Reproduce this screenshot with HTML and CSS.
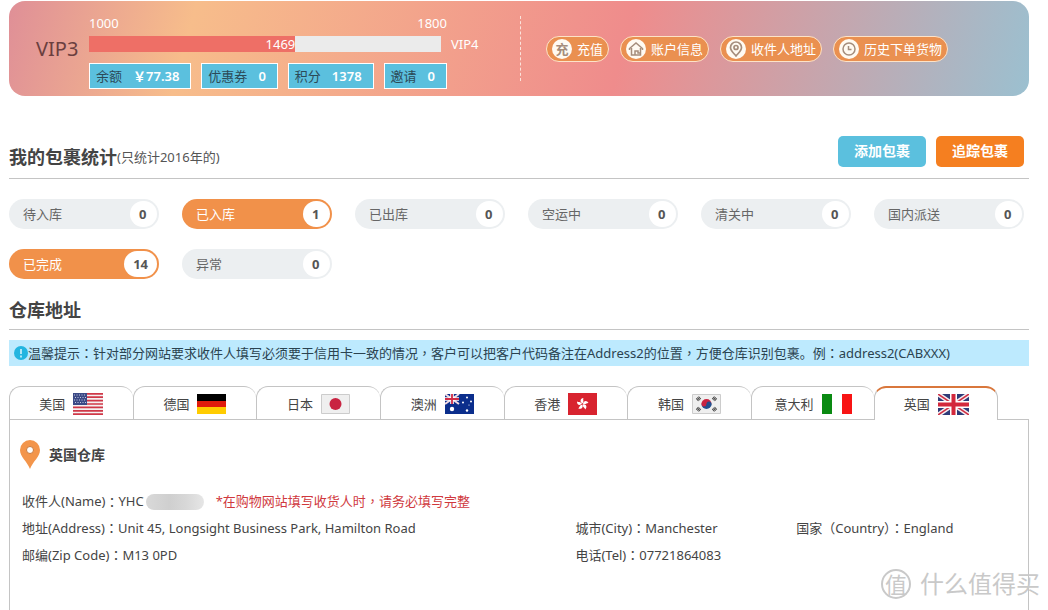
FILE: index.html
```html
<!DOCTYPE html>
<html lang="zh-CN">
<head>
<meta charset="utf-8">
<title>我的包裹</title>
<link rel="stylesheet" href="styles.css">
</head>
<body>
<div class="page">
  <header class="member">
    <div class="level">VIP3</div>
    <div class="growth">
      <div class="range"><span>1000</span><span>1800</span></div>
      <div class="bar-row">
        <div class="bar" role="progressbar" aria-valuemin="1000" aria-valuemax="1800" aria-valuenow="1469"><div class="bar-fill" style="width:58.6%">1469</div></div>
        <span class="next-level">VIP4</span>
      </div>
      <div class="stats">
        <a class="stat" href="#">余额 <b>￥77.38</b></a>
        <a class="stat" href="#">优惠券 <b>0</b></a>
        <a class="stat" href="#">积分 <b>1378</b></a>
        <a class="stat" href="#">邀请 <b>0</b></a>
      </div>
    </div>
    <nav class="links">
      <a class="link" href="#"><span class="dot">充</span>充值</a>
      <a class="link" href="#"><span class="dot"><svg width="16" height="16" viewBox="0 0 16 16" fill="none" stroke="#a58d7c" stroke-width="1.500"><path d="M1.500 9V7.500L8 2l6.500 5.500V9M3.500 7v7h9V7"/><path d="M7 14v-4h3v2h2"/></svg></span>账户信息</a>
      <a class="link" href="#"><span class="dot"><svg width="16" height="16" viewBox="0 0 16 16" fill="none" stroke="#a58d7c" stroke-width="1.700"><path d="M8 15C5 11.500 2.500 9.500 2.500 6.500a5.500 5.500 0 0 1 11 0C13.500 9.500 11 11.500 8 15Z"/><circle cx="8" cy="6.500" r="2"/></svg></span>收件人地址</a>
      <a class="link" href="#"><span class="dot"><svg width="16" height="16" viewBox="0 0 16 16" fill="none" stroke="#a58d7c" stroke-width="1.500"><circle cx="8" cy="8" r="6"/><path d="M7.500 5v3.500h3"/></svg></span>历史下单货物</a>
    </nav>
  </header>

  <section>
    <div class="heading heading-stats">
      <h2>我的包裹统计</h2><span class="note">(只统计2016年的)</span>
      <div class="actions">
        <button class="btn btn-blue" type="button">添加包裹</button>
        <button class="btn btn-orange" type="button">追踪包裹</button>
      </div>
    </div>
    <div class="states">
      <a class="state" href="#">待入库<b>0</b></a>
      <a class="state on" href="#">已入库<b>1</b></a>
      <a class="state" href="#">已出库<b>0</b></a>
      <a class="state" href="#">空运中<b>0</b></a>
      <a class="state" href="#">清关中<b>0</b></a>
      <a class="state" href="#">国内派送<b>0</b></a>
      <a class="state on" href="#">已完成<b>14</b></a>
      <a class="state" href="#">异常<b>0</b></a>
    </div>
  </section>

  <section class="warehouse">
    <div class="heading"><h2>仓库地址</h2></div>
    <p class="tip"><svg width="14" height="14" viewBox="0 0 14 14"><circle cx="7" cy="7" r="7" fill="#23b5e0"/><path d="M7 3v5M7 9.500v2" stroke="#d5f2fc" stroke-width="1.600"/></svg><span>温馨提示<span class="mid" lang="zh-Hant">：</span>针对部分网站要求收件人填写必须要于信用卡一致的情况<span class="mid" lang="zh-Hant">，</span>客户可以把客户代码备注在Address2的位置<span class="mid" lang="zh-Hant">，</span>方便仓库识别包裹。例<span class="mid" lang="zh-Hant">：</span>address2(CABXXX)</span></p>
    <div class="tabs" role="tablist">
      <button class="tab" role="tab" type="button">美国
        <svg width="30" height="22" viewBox="0 0 30 22"><path fill="#f5f1f2" d="M0 0h30v22H0z"/><path stroke="#cf3848" stroke-width="1.700" d="M0 .85h30M0 4.200h30M0 7.600h30M0 11h30M0 14.400h30M0 17.800h30M0 21.150h30"/><path fill="#3c4a86" d="M0 0h14v12H0z"/><path stroke="#c3cae2" stroke-width="1" stroke-dasharray="1 1.500" d="M1 2h12M2 4.500h11M1 7h12M2 9.500h11"/></svg></button>
      <button class="tab" role="tab" type="button">德国
        <svg width="29" height="20" viewBox="0 0 29 20"><path d="M0 0h29v7H0z"/><path fill="#e01b0c" d="M0 7h29v6H0z"/><path fill="#fc0" d="M0 13h29v7H0z"/></svg></button>
      <button class="tab" role="tab" type="button">日本
        <svg width="29" height="20" viewBox="0 0 29 20"><path fill="#efefef" stroke="#ccc" d="M.5.5h28v19H.5z"/><circle cx="14.500" cy="10" r="6" fill="#c92442"/></svg></button>
      <button class="tab" role="tab" type="button">澳洲
        <svg width="29" height="20" viewBox="0 0 29 20"><path fill="#0b2e8c" d="M0 0h29v20H0z"/><path stroke="#f3dce4" stroke-width="2" d="m0 0 14 10M14 0 0 10"/><path stroke="#fff" stroke-width="3.600" d="M7 0v10M0 5h14"/><path stroke="#d02b45" stroke-width="1.800" d="M7 0v10M0 5h14"/><g fill="#fff"><circle cx="7" cy="15" r="2.200"/><circle cx="22" cy="3.500" r="1"/><circle cx="18" cy="8.500" r="1"/><circle cx="26" cy="7.500" r="1"/><circle cx="24" cy="11" r=".6"/><circle cx="22" cy="16.500" r="1.200"/></g></svg></button>
      <button class="tab" role="tab" type="button">香港
        <svg width="29" height="22" viewBox="0 0 29 22"><path fill="#d8232f" d="M0 0h29v22H0z"/><g fill="#fff" transform="translate(14.500 11)"><path id="petal" d="M0-.5C-3-2-2.500-5.500 1-6 0-4.500 2-3 0-.5Z"/><use href="#petal" transform="rotate(72)"/><use href="#petal" transform="rotate(144)"/><use href="#petal" transform="rotate(216)"/><use href="#petal" transform="rotate(288)"/></g></svg></button>
      <button class="tab" role="tab" type="button">韩国
        <svg width="29" height="20" viewBox="0 0 29 20"><path fill="#efefef" stroke="#ccc" d="M.5.5h28v19H.5z"/><path fill="#c92442" d="M9.500 10a5 5 0 0 1 10 0Z"/><path fill="#23508f" d="M9.500 10a5 5 0 0 0 10 0Z"/><circle cx="12" cy="10" r="2.500" fill="#c92442"/><circle cx="17" cy="10" r="2.500" fill="#23508f"/><path stroke="#444" stroke-width="3.500" stroke-dasharray="1 .5" d="m5 6 3-2.500M21 16.500l3-2.500M5 14l3 2.500M21 3.500 24 6"/></svg></button>
      <button class="tab" role="tab" type="button">意大利
        <svg width="30" height="20" viewBox="0 0 30 20"><path fill="#0a8a12" d="M0 0h10v20H0z"/><path fill="#fff" d="M10 0h10v20H10z"/><path fill="#f81414" d="M20 0h10v20H20z"/></svg></button>
      <button class="tab selected" role="tab" type="button" aria-selected="true">英国
        <svg width="31" height="21" viewBox="0 0 31 21"><path fill="#2e3b78" d="M0 0h31v21H0z"/><path stroke="#f5eef1" stroke-width="4.500" d="m0 0 31 21M31 0 0 21"/><path stroke="#cf3045" stroke-width="1.500" d="m0 0 31 21M31 0 0 21"/><path stroke="#fff" stroke-width="7" d="M15.500 0v21M0 10.500h31"/><path stroke="#d3283c" stroke-width="4" d="M15.500 0v21M0 10.500h31"/></svg></button>
    </div>
  </section>

  <section class="panel" role="tabpanel">
    <h3><svg width="20" height="29" viewBox="0 0 20 29"><path fill="#f3954b" d="M10 29C7 21 0 17 0 10a10 10 0 0 1 20 0c0 7-7 11-10 19Z"/><circle cx="10" cy="10" r="3.500" fill="#fff" stroke="#c9793c"/></svg>英国仓库</h3>
    <div class="details">
      <div class="wide">收件人(Name)<span class="mid" lang="zh-Hant">：</span>YHC<span class="masked"></span><span class="warn">*在购物网站填写收货人时<span class="mid" lang="zh-Hant">，</span>请务必填写完整</span></div>
      <div>地址(Address)<span class="mid" lang="zh-Hant">：</span>Unit 45, Longsight Business Park, Hamilton Road</div>
      <div>城市(City)<span class="mid" lang="zh-Hant">：</span>Manchester</div>
      <div>国家（Country<span class="mid" lang="zh-Hant">）</span><span class="mid" lang="zh-Hant">：</span>England</div>
      <div>邮编(Zip Code)<span class="mid" lang="zh-Hant">：</span>M13 0PD</div>
      <div>电话(Tel)<span class="mid" lang="zh-Hant">：</span>07721864083</div>
    </div>
  </section>
  <div class="watermark"><span class="seal">值</span>什么值得买</div>
</div>
</body>
</html>
```
FILE: styles.css
```css
* { box-sizing: border-box; }
body {
  margin: 0;
  background: #fff;
  color: #444;
  font: 13px/20px "Noto Sans", "Noto Sans CJK SC", sans-serif;
}
a { color: inherit; text-decoration: none; }
h2, h3, p { margin: 0; }
button { font: inherit; color: inherit; cursor: pointer; }
svg { flex: none; }
/* full-width punctuation centred in its square */
.mid { font-family: "Noto Sans CJK TC", sans-serif; line-height: 1; }

.page {
  position: relative;
  display: flex;
  flex-direction: column;
  min-height: 100vh;
  padding: 1px 19px 0 9px;
  overflow: hidden;
}

.member {
  display: flex;
  align-items: center;
  height: 95px;
  padding-left: 27px;
  border-radius: 16px;
  background: linear-gradient(105deg, #df8f97 0%, #f7bd8b 18%, #ef8c8c 60%, #9bc0d0 100%);
  color: #fff;
}
.level { width: 53px; font-size: 20px; color: #6b3f3f; }
.growth { width: 394px; padding-top: 3px; }
.range { display: flex; justify-content: space-between; width: 358px; line-height: 22px; }
.bar-row { display: flex; align-items: center; gap: 10px; height: 16px; margin: 2px 0 11px; }
.bar { width: 352px; height: 16px; background: #ebebeb; }
.bar-fill { height: 16px; background: #ee6f66; line-height: 16px; text-align: right; }
.stats { display: flex; gap: 10px; width: 358px; }
.stat {
  display: flex;
  flex: auto;
  justify-content: space-between;
  padding: 0 11px 0 6px;
  border: 1px solid #fff;
  background: #5bc0de;
  color: #2c4a57;
  line-height: 24px;
  white-space: nowrap;
}
.stat b { color: #fff; font-weight: 600; }

.links {
  display: flex;
  align-items: center;
  gap: 11px;
  height: 65px;
  margin-left: 37px;
  padding-left: 25px;
  border-left: 1px dashed #fbe3dc;
}
.link {
  display: flex;
  align-items: center;
  gap: 5px;
  height: 26px;
  padding: 0 5px;
  border: 1px solid #fde3c8;
  border-radius: 13px;
  background: #ea9050;
  white-space: nowrap;
}
.dot {
  display: flex;
  align-items: center;
  justify-content: center;
  width: 20px;
  height: 20px;
  border-radius: 50%;
  background: #fffaf2;
  color: #a58d7c;
  font-weight: 700;
}

.heading {
  display: flex;
  align-items: center;
  height: 40px;
  border-bottom: 1px solid #c4c4c4;
}
.heading h2 { font-size: 18px; line-height: 24px; }
.heading-stats { height: 44px; margin-top: 39px; }
.note { color: #555; }
.actions { display: flex; gap: 10px; margin: 0 5px 11px auto; }
.btn {
  height: 31px;
  padding: 0 16px;
  border: 0;
  border-radius: 5px;
  color: #fff;
  font-size: 14px;
  font-weight: 700;
}
.btn-blue { background: #5bc0de; }
.btn-orange { background: #f57f20; }

.states {
  display: grid;
  grid-template-columns: repeat(6, 1fr);
  gap: 20px 23px;
  padding: 20px 5px 0 0;
}
.state {
  display: flex;
  align-items: center;
  justify-content: space-between;
  height: 30px;
  padding: 0 2px 0 14px;
  border-radius: 15px;
  background: #eceff1;
  color: #666;
}
.state b {
  min-width: 27px;
  padding: 0 9px;
  border-radius: 13px;
  background: #fff;
  color: #555;
  line-height: 26px;
}
.state.on { background: #f1914a; color: #fff; }

.warehouse { padding-top: 11px; }
.tip {
  display: flex;
  align-items: center;
  min-height: 26px;
  margin-top: 10px;
  padding-left: 5px;
  background: #bdeafe;
  color: #2b4350;
}
.tabs {
  display: grid;
  grid-template-columns: repeat(8, 1fr);
  margin: 20px 31px 0 0;
}
.tab {
  display: flex;
  align-items: center;
  justify-content: center;
  gap: 8px;
  height: 33px;
  padding: 1px 0 0;
  border: 0 solid #c4c4c4;
  border-width: 1px 0 0 1px;
  border-radius: 12px 12px 0 0;
  background: #fff;
}
.tab.selected {
  position: relative;
  height: 34px;
  margin-bottom: -1px;
  padding: 0;
  border-width: 2px 1px 0;
  border-top-color: #d9773c;
}

.panel {
  flex: 1;
  padding: 20px 12px;
  border: 1px solid #c4c4c4;
  border-bottom: 0;
}
.panel h3 {
  display: flex;
  align-items: center;
  gap: 9px;
  font-size: 14px;
  margin-left: -2px;
}
.details {
  display: grid;
  grid-template-columns: 554fr 221fr 220fr;
  margin-top: 19px;
  line-height: 27px;
}
.wide { display: flex; align-items: center; grid-column: 1 / -1; }
.masked {
  width: 58px;
  height: 16px;
  margin: 0 12px 0 2px;
  border-radius: 8px;
  background: linear-gradient(90deg, #d9d9d9, #cfcfcf 40%, #d8d8d8 70%, #e6e6e6);
}
.warn { color: #d0393e; }

.watermark {
  position: absolute;
  right: 8px;
  bottom: 8px;
  display: flex;
  align-items: center;
  gap: 9px;
  color: #c9c9c9;
  font-size: 24px;
  line-height: 36px;
}
.seal {
  width: 30px;
  height: 30px;
  border: 2px solid #c9c9c9;
  border-radius: 50%;
  font-size: 22px;
  line-height: 26px;
  text-align: center;
}
```
